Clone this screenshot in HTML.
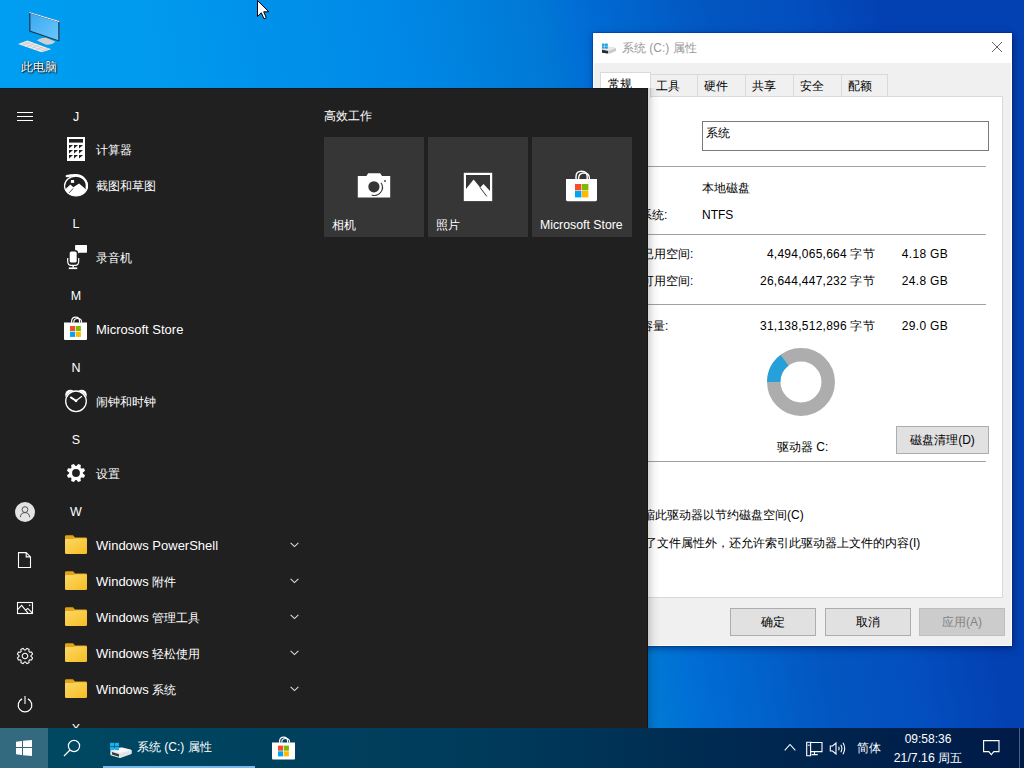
<!DOCTYPE html>
<html><head><meta charset="utf-8">
<style>
*{margin:0;padding:0;box-sizing:border-box}
html,body{width:1024px;height:768px;overflow:hidden}
body{position:relative;font-family:"Liberation Sans",sans-serif;background:linear-gradient(80deg,#00a2f4 0%,#009ef2 11%,#0099ee 25%,#0088e6 46%,#0078d4 58%,#006ed6 61%,#0355c0 73%,#034fc0 80%,#0340b2 88%,#0340b2 100%)}
.a{position:absolute}
.w{color:#fff}
#desk{left:0;top:0;width:1024px;height:728px}
/* dialog */
#dlg{left:592px;top:33px;width:420px;height:613px;background:#f0f0f0;border:1px solid #3a6fc0}
#dlg .tb{left:0;top:0;width:418px;height:30px;background:#fff}
.t{font-size:12px;color:#000;white-space:nowrap;line-height:14px}
/* start */
#start{left:0;top:88px;width:648px;height:640px;background:#202020;border-top:1px solid #121a22;border-right:1px solid #141414}
.ltr{left:66px;width:20px;text-align:center;font-size:12.5px;color:#fff;line-height:14px}
.c{font-size:12.4px}
.itm{left:96px;font-size:13px;color:#fff;line-height:14px;white-space:nowrap}
.tile{width:100px;height:100px;background:#363636;top:137px}
.chev{left:288px;width:10px;height:6px}
/* taskbar */
#tbar{left:0;top:728px;width:1024px;height:40px;background:linear-gradient(90deg,#004a64 0%,#004862 5%,#003a5a 49%,#002850 73%,#001a48 100%)}
</style></head><body>
<div id="desk" class="a"></div>
<svg class="a" style="left:16px;top:10px" width="46" height="44" viewBox="0 0 46 44">
  <defs><linearGradient id="scr" x1="0" y1="0" x2="1" y2="1"><stop offset="0" stop-color="#3aa8f2"/><stop offset="1" stop-color="#6cc8fa"/></linearGradient></defs>
  <path d="M21 30.6 Q24 27.6 30 27.8 L39.2 31.4 Q36.5 35 29.5 34.6 Z" fill="#d0d0d0"/>
  <path d="M13.3 2 L43.4 11.1 L43.4 31.6 L13.3 21.6 Z" fill="#1c2c3c"/>
  <path d="M13.3 2 L43.4 11.1 L43.4 12.2 L13.3 3.1 Z" fill="#e8f4fc"/>
  <path d="M14.4 3.6 L42.3 12.1 L42.3 30.2 L14.4 20.8 Z" fill="url(#scr)"/>
  <path d="M2 34 L11.4 30.5 L35.2 39.3 L25.5 42.2 Z" fill="#eeeeee"/>
  <path d="M5.2 32.8 L28.6 41.2 M8.3 31.6 L31.8 40.2 M6.5 35.2 L14.6 31.8 M11 36.8 L19 33.4 M15.5 38.4 L23.4 35 M20 40 L27.8 36.6 M24.5 41.4 L32.2 38.2" stroke="#bdbdbd" stroke-width="0.6"/>
</svg>
<div class="a" style="left:21px;top:60px;color:#fff;font-size:12px;line-height:14px;text-shadow:0 0 2px rgba(0,0,0,.9),1px 1px 1px rgba(0,0,0,.8)">此电脑</div>
<svg class="a" style="left:257px;top:0px" width="13" height="20" viewBox="0 0 13 20"><path d="M0.5 0.5 V16.5 L4.3 12.8 L7 18.8 L9.3 17.8 L6.7 11.8 L11.8 11.8 Z" fill="#fff" stroke="#000" stroke-width="1"/></svg>

<!-- Properties dialog -->
<div class="a" style="left:593px;top:33px;width:419px;height:613px;background:#f0f0f0;border:1px solid #fafcff;box-shadow:0 0 0 1px rgba(0,30,90,.25),1px 2px 7px rgba(0,10,60,.5)"></div>
<div class="a" style="left:594px;top:34px;width:417px;height:29px;background:#fff"></div>
<!-- title icon -->
<svg class="a" style="left:601px;top:43px" width="16" height="11" viewBox="0 0 16 11"><path d="M1 6.5 L6.5 3.5 L15 5 V8 L8.5 10.8 L1 9.8 Z" fill="#c9c9c9"/><path d="M1 6.5 L6.5 3.5 L15 5 L8.5 7.8 Z" fill="#e8e8e8"/><path d="M1 6.8 L7 7.9 V10.6 L1 9.8 Z" fill="#2a2a2a"/><g fill="#1a9fe0"><rect x="1" y="0.6" width="2.6" height="2.3"/><rect x="4" y="0.6" width="2.8" height="2.3"/><rect x="1" y="3.3" width="2.6" height="2.3"/><rect x="4" y="3.3" width="2.8" height="2.3"/></g></svg>
<div class="a t" style="left:622px;top:41px;color:#999;font-size:12px">系统 (C:) 属性</div>
<svg class="a" style="left:991px;top:41px" width="12" height="12" viewBox="0 0 12 12"><path d="M1 1 L11 11 M11 1 L1 11" stroke="#5a5a5a" stroke-width="0.95"/></svg>
<!-- tabs -->
<div class="a" style="left:650px;top:74px;width:238px;height:23px;background:#f0f0f0;border:1px solid #d9d9d9;border-bottom:none"></div>
<div class="a" style="left:697px;top:74px;width:1px;height:23px;background:#d9d9d9"></div>
<div class="a" style="left:745px;top:74px;width:1px;height:23px;background:#d9d9d9"></div>
<div class="a" style="left:793px;top:74px;width:1px;height:23px;background:#d9d9d9"></div>
<div class="a" style="left:841px;top:74px;width:1px;height:23px;background:#d9d9d9"></div>
<div class="a" style="left:600px;top:96px;width:403px;height:502px;background:#fff;border:1px solid #d9d9d9"></div>
<div class="a" style="left:600px;top:72px;width:51px;height:26px;background:#fff;border:1px solid #d9d9d9;border-bottom:none"></div>
<div class="a t" style="left:608px;top:76.5px">常规</div>
<div class="a t" style="left:656px;top:79px">工具</div>
<div class="a t" style="left:704px;top:79px">硬件</div>
<div class="a t" style="left:752px;top:79px">共享</div>
<div class="a t" style="left:800px;top:79px">安全</div>
<div class="a t" style="left:848px;top:79px">配额</div>
<!-- name box -->
<div class="a" style="left:702px;top:121px;width:287px;height:30px;background:#fff;border:1px solid #7a7a7a"></div>
<div class="a t" style="left:706px;top:126px">系统</div>
<div class="a" style="left:610px;top:166px;width:376px;height:1px;background:#a0a0a0"></div>
<div class="a t" style="left:616px;top:181px">类型:</div>
<div class="a t" style="left:702px;top:181px">本地磁盘</div>
<div class="a t" style="left:616px;top:208px">文件系统:</div>
<div class="a t" style="left:702px;top:208px">NTFS</div>
<div class="a" style="left:610px;top:234px;width:376px;height:1px;background:#a0a0a0"></div>
<div class="a t" style="left:642px;top:247px">已用空间:</div>
<div class="a t" style="left:700px;top:247px;width:175px;text-align:right;letter-spacing:0.25px">4,494,065,664 字节</div>
<div class="a t" style="left:881px;top:247px;width:67px;text-align:right;letter-spacing:0.3px">4.18 GB</div>
<div class="a t" style="left:642px;top:274px">可用空间:</div>
<div class="a t" style="left:700px;top:274px;width:175px;text-align:right;letter-spacing:0.25px">26,644,447,232 字节</div>
<div class="a t" style="left:881px;top:274px;width:67px;text-align:right;letter-spacing:0.3px">24.8 GB</div>
<div class="a" style="left:610px;top:304px;width:376px;height:1px;background:#a0a0a0"></div>
<div class="a t" style="left:641px;top:319px">容量:</div>
<div class="a t" style="left:700px;top:319px;width:175px;text-align:right;letter-spacing:0.25px">31,138,512,896 字节</div>
<div class="a t" style="left:881px;top:319px;width:67px;text-align:right;letter-spacing:0.3px">29.0 GB</div>
<!-- donut -->
<svg class="a" style="left:767px;top:348px" width="68" height="68" viewBox="-34 -34 68 68">
  <circle cx="0" cy="0" r="27.2" fill="none" stroke="#adadad" stroke-width="13.5"/>
  <path d="M-33.9 0 A33.9 33.9 0 0 1 -20.4 -27.1 L-12.5 -16.6 A20.7 20.7 0 0 0 -20.7 0 Z" fill="#26a0da"/>
</svg>
<div class="a t" style="left:777px;top:440px">驱动器 C:</div>
<div class="a" style="left:896px;top:426px;width:93px;height:28px;background:#e1e1e1;border:1px solid #adadad"></div>
<div class="a t" style="left:896px;top:433px;width:93px;text-align:center">磁盘清理(D)</div>
<div class="a" style="left:610px;top:461px;width:376px;height:1px;background:#a0a0a0"></div>
<div class="a t" style="left:631px;top:508px">压缩此驱动器以节约磁盘空间(C)</div>
<div class="a t" style="left:633px;top:536px">除了文件属性外，还允许索引此驱动器上文件的内容(I)</div>
<!-- buttons -->
<div class="a" style="left:730px;top:608px;width:86px;height:28px;background:#e1e1e1;border:1px solid #adadad"></div>
<div class="a t" style="left:730px;top:615px;width:86px;text-align:center">确定</div>
<div class="a" style="left:825px;top:608px;width:86px;height:28px;background:#e1e1e1;border:1px solid #adadad"></div>
<div class="a t" style="left:825px;top:615px;width:86px;text-align:center">取消</div>
<div class="a" style="left:919px;top:608px;width:86px;height:28px;background:#cccccc;border:1px solid #bfbfbf"></div>
<div class="a t" style="left:919px;top:615px;width:86px;text-align:center;color:#838383">应用(A)</div>

<!-- Start menu -->
<div id="start" class="a"></div>
<svg width="0" height="0" style="position:absolute"><defs><linearGradient id="fg" x1="0" y1="0" x2="1" y2="1"><stop offset="0" stop-color="#fcd867"/><stop offset="1" stop-color="#f6bd22"/></linearGradient></defs></svg>
<div class="a" style="left:648px;top:88px;width:12px;height:640px;background:linear-gradient(90deg,rgba(0,0,0,.16),rgba(0,0,0,.04) 50%,rgba(0,0,0,0))"></div>
<div class="a ltr" style="top:110px">J</div>
<div class="a itm" style="top:143px"><span class="c">计算器</span></div>
<svg class="a" style="left:67px;top:137px" width="18" height="24" viewBox="0 0 18 24"><rect width="18" height="24" fill="#fff"/><rect x="2" y="2" width="14" height="3.6" fill="#202020"/><path d="M2 8 h4 L2 11.5 Z" fill="#202020"/><path d="M7 8 h4 L7 11.5 Z" fill="#202020"/><path d="M12 8 h4 L12 11.5 Z" fill="#202020"/><path d="M2 13 h4 L2 16.5 Z" fill="#202020"/><path d="M7 13 h4 L7 16.5 Z" fill="#202020"/><path d="M12 13 h4 L12 16.5 Z" fill="#202020"/><path d="M2 18 h4 L2 21.5 Z" fill="#202020"/><path d="M7 18 h4 L7 21.5 Z" fill="#202020"/><path d="M12 18 h4 L12 21.5 Z" fill="#202020"/></svg>
<div class="a itm" style="top:179px"><span class="c">截图和草图</span></div>
<svg class="a" style="left:63px;top:173px" width="26" height="25" viewBox="0 0 26 25"><defs><clipPath id="cc"><ellipse cx="13" cy="13" rx="11.5" ry="9.9"/></clipPath></defs><ellipse cx="13" cy="13" rx="11.5" ry="9.9" fill="none" stroke="#fff" stroke-width="1.2"/><g clip-path="url(#cc)"><path d="M0 17.5 L2 16.4 L7.4 11.6 L10.3 14.2 L16.1 10.6 L23.4 16.8 L26 17 V25 H0 Z" fill="#fff"/><path d="M6.2 19.8 L10.2 15.4" stroke="#202020" stroke-width="0.8"/></g><path d="M3.8 3.1 Q7.5 2.3 12.5 2.3 A11.2 10.6 0 0 1 23.7 14.8" fill="none" stroke="#fff" stroke-width="2.4" stroke-linecap="round"/><rect x="7.9" y="7" width="3.2" height="2.9" fill="#fff"/></svg>
<div class="a ltr" style="top:217px">L</div>
<div class="a itm" style="top:251px"><span class="c">录音机</span></div>
<svg class="a" style="left:65px;top:244px" width="24" height="26" viewBox="0 0 24 26"><path d="M10.6 0.9 H21.4 Q22 0.9 22 1.5 V8.1 Q22 8.7 21.4 8.7 H13.8 L11.6 11.6 V8.7 H10.6 Q10.1 8.7 10.1 8.1 V1.5 Q10.1 0.9 10.6 0.9 Z" fill="#fff"/><rect x="4" y="6.8" width="8.4" height="12.5" rx="2.3" fill="#fff" stroke="#202020" stroke-width="1.4"/><path d="M2.7 14 V17.2 Q2.7 21.4 6.2 21.4 H10.2 Q13.7 21.4 13.7 17.2 V14" fill="none" stroke="#fff" stroke-width="1.2"/><path d="M8.2 21.4 V23.6" stroke="#fff" stroke-width="1.5"/><rect x="3.8" y="23.4" width="8.4" height="1.7" fill="#fff"/></svg>
<div class="a ltr" style="top:289px">M</div>
<div class="a itm" style="top:323px">Microsoft Store</div>
<svg class="a" style="left:63px;top:316px" width="25" height="25" viewBox="0 0 25 25"><path d="M8.6 6.8 V5.4 Q8.6 1.2 12.6 1.2 Q16.6 1.2 16.6 5.4 V6.8" fill="none" stroke="#fff" stroke-width="1.2"/><path d="M10.8 6.8 V6 Q10.8 2.5 14.7 2.5 Q18.6 2.5 18.6 6 V6.8" fill="none" stroke="#fff" stroke-width="1.1"/><path d="M1 6.6 H24 V23 Q24 24 23 24 H2 Q1 24 1 23 Z" fill="#fff"/><rect x="7" y="10" width="5.1" height="5.1" fill="#f25022"/><rect x="12.8" y="10" width="5.1" height="5.1" fill="#7fba00"/><rect x="7" y="15.8" width="5.1" height="5.1" fill="#00a4ef"/><rect x="12.8" y="15.8" width="5.1" height="5.1" fill="#ffb900"/></svg>
<div class="a ltr" style="top:361px">N</div>
<div class="a itm" style="top:395px"><span class="c">闹钟和时钟</span></div>
<svg class="a" style="left:63px;top:389px" width="26" height="25" viewBox="0 0 26 25"><circle cx="7.3" cy="5.8" r="5.1" fill="#fff"/><circle cx="18.7" cy="5.8" r="5.1" fill="#fff"/><circle cx="13" cy="12.3" r="10.9" fill="#202020"/><circle cx="13" cy="12.3" r="10.3" fill="#202020" stroke="#fff" stroke-width="1.3"/><path d="M13 11.8 L7.8 8.4" stroke="#fff" stroke-width="1.9" stroke-linecap="round"/><path d="M13 11.8 L18.6 7.6" stroke="#fff" stroke-width="1.3" stroke-linecap="round"/><circle cx="13" cy="11.8" r="1.4" fill="#fff"/></svg>
<div class="a ltr" style="top:433px">S</div>
<div class="a itm" style="top:467px"><span class="c">设置</span></div>
<svg class="a" style="left:66px;top:463px" width="20" height="20" viewBox="-10 -10 20 20"><path d="M0.47 -6.88 L2.18 -9.04 L4.86 -7.93 L4.54 -5.20 L5.20 -4.54 L7.93 -4.86 L9.04 -2.18 L6.88 -0.47 L6.88 0.47 L9.04 2.18 L7.93 4.86 L5.20 4.54 L4.54 5.20 L4.86 7.93 L2.18 9.04 L0.47 6.88 L-0.47 6.88 L-2.18 9.04 L-4.86 7.93 L-4.54 5.20 L-5.20 4.54 L-7.93 4.86 L-9.04 2.18 L-6.88 0.47 L-6.88 -0.47 L-9.04 -2.18 L-7.93 -4.86 L-5.20 -4.54 L-4.54 -5.20 L-4.86 -7.93 L-2.18 -9.04 L-0.47 -6.88 Z M3.9 0 A3.9 3.9 0 1 0 -3.9 0 A3.9 3.9 0 1 0 3.9 0 Z" fill="#fff" fill-rule="evenodd"/></svg>
<div class="a ltr" style="top:505px">W</div>
<div class="a itm" style="top:539px">Windows PowerShell</div>
<svg class="a" style="left:65px;top:535px" width="22" height="20" viewBox="0 0 22 20"><path d="M0 1.6 Q0 0.2 1.4 0.2 H8 L10 2.4 H20.6 Q22 2.4 22 3.8 V17.6 Q22 19 20.6 19 H1.4 Q0 19 0 17.6 Z" fill="#e2a416"/><path d="M0 5.4 Q0 4 1.4 4 H8.4 L10.6 3.2 H20.6 Q22 3.2 22 4.6 V17.6 Q22 19 20.6 19 H1.4 Q0 19 0 17.6 Z" fill="url(#fg)"/></svg>
<svg class="a" style="left:289.5px;top:542px" width="9" height="6" viewBox="0 0 9 6"><path d="M0.6 0.8 L4.5 4.6 L8.4 0.8" fill="none" stroke="#ddd" stroke-width="1.1"/></svg>
<div class="a itm" style="top:575px">Windows <span class="c">附件</span></div>
<svg class="a" style="left:65px;top:571px" width="22" height="20" viewBox="0 0 22 20"><path d="M0 1.6 Q0 0.2 1.4 0.2 H8 L10 2.4 H20.6 Q22 2.4 22 3.8 V17.6 Q22 19 20.6 19 H1.4 Q0 19 0 17.6 Z" fill="#e2a416"/><path d="M0 5.4 Q0 4 1.4 4 H8.4 L10.6 3.2 H20.6 Q22 3.2 22 4.6 V17.6 Q22 19 20.6 19 H1.4 Q0 19 0 17.6 Z" fill="url(#fg)"/></svg>
<svg class="a" style="left:289.5px;top:578px" width="9" height="6" viewBox="0 0 9 6"><path d="M0.6 0.8 L4.5 4.6 L8.4 0.8" fill="none" stroke="#ddd" stroke-width="1.1"/></svg>
<div class="a itm" style="top:611px">Windows <span class="c">管理工具</span></div>
<svg class="a" style="left:65px;top:607px" width="22" height="20" viewBox="0 0 22 20"><path d="M0 1.6 Q0 0.2 1.4 0.2 H8 L10 2.4 H20.6 Q22 2.4 22 3.8 V17.6 Q22 19 20.6 19 H1.4 Q0 19 0 17.6 Z" fill="#e2a416"/><path d="M0 5.4 Q0 4 1.4 4 H8.4 L10.6 3.2 H20.6 Q22 3.2 22 4.6 V17.6 Q22 19 20.6 19 H1.4 Q0 19 0 17.6 Z" fill="url(#fg)"/></svg>
<svg class="a" style="left:289.5px;top:614px" width="9" height="6" viewBox="0 0 9 6"><path d="M0.6 0.8 L4.5 4.6 L8.4 0.8" fill="none" stroke="#ddd" stroke-width="1.1"/></svg>
<div class="a itm" style="top:647px">Windows <span class="c">轻松使用</span></div>
<svg class="a" style="left:65px;top:643px" width="22" height="20" viewBox="0 0 22 20"><path d="M0 1.6 Q0 0.2 1.4 0.2 H8 L10 2.4 H20.6 Q22 2.4 22 3.8 V17.6 Q22 19 20.6 19 H1.4 Q0 19 0 17.6 Z" fill="#e2a416"/><path d="M0 5.4 Q0 4 1.4 4 H8.4 L10.6 3.2 H20.6 Q22 3.2 22 4.6 V17.6 Q22 19 20.6 19 H1.4 Q0 19 0 17.6 Z" fill="url(#fg)"/></svg>
<svg class="a" style="left:289.5px;top:650px" width="9" height="6" viewBox="0 0 9 6"><path d="M0.6 0.8 L4.5 4.6 L8.4 0.8" fill="none" stroke="#ddd" stroke-width="1.1"/></svg>
<div class="a itm" style="top:683px">Windows <span class="c">系统</span></div>
<svg class="a" style="left:65px;top:679px" width="22" height="20" viewBox="0 0 22 20"><path d="M0 1.6 Q0 0.2 1.4 0.2 H8 L10 2.4 H20.6 Q22 2.4 22 3.8 V17.6 Q22 19 20.6 19 H1.4 Q0 19 0 17.6 Z" fill="#e2a416"/><path d="M0 5.4 Q0 4 1.4 4 H8.4 L10.6 3.2 H20.6 Q22 3.2 22 4.6 V17.6 Q22 19 20.6 19 H1.4 Q0 19 0 17.6 Z" fill="url(#fg)"/></svg>
<svg class="a" style="left:289.5px;top:686px" width="9" height="6" viewBox="0 0 9 6"><path d="M0.6 0.8 L4.5 4.6 L8.4 0.8" fill="none" stroke="#ddd" stroke-width="1.1"/></svg>
<div class="a ltr" style="top:722px">X</div>
<svg class="a" style="left:17px;top:111px" width="16" height="11" viewBox="0 0 16 11"><path d="M0 1.5 H16 M0 5.5 H16 M0 9.5 H16" stroke="#fff" stroke-width="1.1"/></svg>
<svg class="a" style="left:15px;top:502px" width="20" height="20" viewBox="0 0 20 20"><circle cx="10" cy="10" r="10" fill="#e3e3e3"/><circle cx="10" cy="7.6" r="2.9" fill="none" stroke="#555" stroke-width="1"/><path d="M5.3 15.2 Q5.8 10.6 10 10.6 Q14.2 10.6 14.7 15.2" fill="none" stroke="#555" stroke-width="1"/></svg>
<svg class="a" style="left:17px;top:552px" width="16" height="17" viewBox="0 0 16 17"><path d="M1.5 0.6 H9.2 L13.5 4.9 V15.5 H1.5 Z M9.2 0.6 V4.9 H13.5" fill="none" stroke="#fff" stroke-width="1.1"/></svg>
<svg class="a" style="left:16px;top:601px" width="18" height="14" viewBox="0 0 18 14"><rect x="1.5" y="1.5" width="15" height="11" fill="none" stroke="#fff" stroke-width="1.1"/><path d="M1.6 8.6 L5.6 4.4 L12.2 12.4 M9.4 9.2 L11.8 7.4 L16.4 12.2" fill="none" stroke="#fff" stroke-width="1.1"/><circle cx="13.7" cy="4.3" r="0.8" fill="#fff"/></svg>
<svg class="a" style="left:16px;top:647px" width="18" height="18" viewBox="-9 -9 18 18"><path d="M0.53 -5.98 L1.84 -7.58 L4.06 -6.66 L3.85 -4.60 L4.60 -3.85 L6.66 -4.06 L7.58 -1.84 L5.98 -0.53 L5.98 0.53 L7.58 1.84 L6.66 4.06 L4.60 3.85 L3.85 4.60 L4.06 6.66 L1.84 7.58 L0.53 5.98 L-0.53 5.98 L-1.84 7.58 L-4.06 6.66 L-3.85 4.60 L-4.60 3.85 L-6.66 4.06 L-7.58 1.84 L-5.98 0.53 L-5.98 -0.53 L-7.58 -1.84 L-6.66 -4.06 L-4.60 -3.85 L-3.85 -4.60 L-4.06 -6.66 L-1.84 -7.58 L-0.53 -5.98 Z" fill="none" stroke="#fff" stroke-width="1.05"/><circle r="2.8" fill="none" stroke="#fff" stroke-width="1.05"/></svg>
<svg class="a" style="left:16px;top:696px" width="18" height="18" viewBox="-9 -9 18 18"><path d="M-2.9 -6.1 A6.8 6.8 0 1 0 2.9 -6.1" fill="none" stroke="#fff" stroke-width="1.2"/><path d="M0 -9 V-1" stroke="#ddd" stroke-width="1.3"/></svg>
<div class="a c w" style="left:324px;top:109px;font-size:12.3px;line-height:14px">高效工作</div>
<div class="a tile" style="left:324px"></div>
<div class="a itm" style="left:332px;top:218px"><span class="c">相机</span></div>
<div class="a tile" style="left:428px"></div>
<div class="a itm" style="left:436px;top:218px"><span class="c">照片</span></div>
<div class="a tile" style="left:532px"></div>
<div class="a itm" style="left:540px;top:218px;font-size:12.3px">Microsoft Store</div>
<svg class="a" style="left:357px;top:172px" width="34" height="27" viewBox="0 0 34 27"><path d="M0.8 4 H9.4 L11.2 1.3 H23.2 L25 4 H33.2 V25.6 H0.8 Z" fill="#fff"/><circle cx="16.9" cy="14.8" r="5.6" fill="#363636"/><path d="M23.95 10.8 A8 8 0 0 1 14.66 22.9" fill="none" stroke="#363636" stroke-width="1.1"/><circle cx="28" cy="9" r="0.9" fill="#363636"/></svg>
<svg class="a" style="left:463px;top:172px" width="30" height="30" viewBox="0 0 30 30"><rect x="0.8" y="0.8" width="28.4" height="28.3" fill="#fff"/><path d="M3 3 H27 V19 L20.5 12 L17.2 15.6 L10.6 7.5 L3 17 Z" fill="#363636"/><path d="M17 15.4 L23.8 24.4" stroke="#363636" stroke-width="1"/></svg>
<svg class="a" style="left:565px;top:170px" width="33" height="32" viewBox="0 0 33 32"><path d="M11 10 V6.8 Q11 1.2 16.6 1.2 Q22.2 1.2 22.2 6.8 V10" fill="none" stroke="#fff" stroke-width="1.4"/><path d="M13.6 10 V8.4 Q13.6 3 19 3 Q24.4 3 24.4 8.4 V10" fill="none" stroke="#fff" stroke-width="1.3"/><path d="M1 9 H32 V29.8 Q32 31.2 30.6 31.2 H2.4 Q1 31.2 1 29.8 Z" fill="#fff"/><rect x="10" y="14" width="6.4" height="6.4" fill="#f25022"/><rect x="17" y="14" width="6.4" height="6.4" fill="#7fba00"/><rect x="10" y="21" width="6.4" height="6.4" fill="#00a4ef"/><rect x="17" y="21" width="6.4" height="6.4" fill="#ffb900"/></svg>
<!-- Taskbar -->
<div id="tbar" class="a"></div>
<div class="a" style="left:0;top:728px;width:48px;height:40px;background:#336a80"></div>
<svg class="a" style="left:16px;top:740px" width="16" height="16" viewBox="0 0 16 16"><path d="M0 1.8 L6 1 V7 H0 Z M7 0.85 L16 0 V7 H7 Z M0 8 H6 V15 L0 14.2 Z M7 8 H16 V16 L7 15.15 Z" fill="#fff"/></svg>
<svg class="a" style="left:63px;top:739px" width="18" height="18" viewBox="0 0 18 18"><circle cx="11" cy="7" r="5.6" fill="none" stroke="#fff" stroke-width="1.2"/><path d="M7 11 L1 17" stroke="#fff" stroke-width="1.3"/></svg>
<div class="a" style="left:103px;top:766px;width:152px;height:2px;background:#76b9ed"></div>
<svg class="a" style="left:109px;top:742px" width="24" height="17" viewBox="0 0 24 17"><path d="M1.5 8.6 Q1 7.8 2.2 7.2 L11.5 5.5 Q12.5 5.3 13.5 5.6 L21.6 7.6 Q22.8 8 22.8 9 V11 Q22.8 11.8 21.8 12.2 L12 15.8 Q11 16.2 10 15.8 L2.2 13.4 Q1.2 13 1.2 12 Z" fill="#e4e4e4"/><path d="M2 8.6 L11.5 11 L22.5 8.2 L12.5 5.8 Z" fill="#f8f8f8"/><path d="M3 10 L10 12.2 V14.8 L3 12.6 Z" fill="#3a3a3a"/><g fill="#1ab0ee"><rect x="1" y="0.8" width="4" height="3.4"/><rect x="5.6" y="0.8" width="4.4" height="3.4"/><rect x="1" y="4.8" width="4" height="3.4"/><rect x="5.6" y="4.8" width="4.4" height="3.4"/></g></svg>
<div class="a" style="left:137px;top:740px;color:#fff;font-size:12px;line-height:14px;white-space:nowrap"><span style="font-size:12.3px">系统</span> (C:) <span style="font-size:12.3px">属性</span></div>
<svg class="a" style="left:271px;top:735.5px" width="25" height="25" viewBox="0 0 25 25"><path d="M8.6 6.8 V5.4 Q8.6 1.2 12.6 1.2 Q16.6 1.2 16.6 5.4 V6.8" fill="none" stroke="#fff" stroke-width="1.2"/><path d="M10.8 6.8 V6 Q10.8 2.5 14.7 2.5 Q18.6 2.5 18.6 6 V6.8" fill="none" stroke="#fff" stroke-width="1.1"/><path d="M1 6.6 H24 V22.5 Q24 23.5 23 23.5 H2 Q1 23.5 1 22.5 Z" fill="#fff"/><rect x="7" y="9.6" width="5.1" height="5.1" fill="#f25022"/><rect x="12.8" y="9.6" width="5.1" height="5.1" fill="#7fba00"/><rect x="7" y="15.3" width="5.1" height="5.1" fill="#00a4ef"/><rect x="12.8" y="15.3" width="5.1" height="5.1" fill="#ffb900"/></svg>
<svg class="a" style="left:784px;top:743px" width="12" height="8" viewBox="0 0 12 8"><path d="M0.7 7.3 L6 1.5 L11.3 7.3" fill="none" stroke="#fff" stroke-width="1.1"/></svg>
<svg class="a" style="left:806px;top:741px" width="17" height="16" viewBox="0 0 17 16"><path d="M4.6 1.5 H16 V10.6 H4.6" fill="none" stroke="#fff" stroke-width="1.1"/><path d="M0.7 1.2 H4.6 V14.8 H0.7 Z" fill="#0a2352" stroke="#fff" stroke-width="1.1"/><path d="M1.6 4.2 H3.8" stroke="#fff" stroke-width="1"/><path d="M8.5 10.6 V13.4 M5.5 13.6 H11.8" stroke="#fff" stroke-width="1.1"/></svg>
<svg class="a" style="left:829px;top:742px" width="17" height="13" viewBox="0 0 17 13"><path d="M1.3 4 H3.6 L7 1 V12 L3.6 9 H1.3 Z" fill="none" stroke="#fff" stroke-width="1.1"/><path d="M9.6 4.8 Q10.6 6.5 9.6 8.2 M11.8 2.8 Q14 6.5 11.8 10.2 M14 0.8 Q17.4 6.5 14 12.2" fill="none" stroke="#fff" stroke-width="1.1"/></svg>
<div class="a c" style="left:857px;top:741px;color:#fff;font-size:12.3px;line-height:14px">简体</div>
<div class="a" style="left:895px;top:732px;width:66px;text-align:center;color:#fff;font-size:12px;line-height:14px">09:58:36</div>
<div class="a" style="left:888px;top:751px;width:80px;text-align:center;color:#fff;font-size:12.3px;line-height:14px;white-space:nowrap">21/7.16 <span class="c">周五</span></div>
<svg class="a" style="left:983px;top:740px" width="17" height="16" viewBox="0 0 17 16"><path d="M0.6 0.6 H16 V11.6 H10.8 L8.3 14.6 L5.8 11.6 H0.6 Z" fill="none" stroke="#fff" stroke-width="1.1"/></svg>
<div class="a" style="left:1019px;top:728px;width:1px;height:40px;background:rgba(255,255,255,.3)"></div>
</body></html>
